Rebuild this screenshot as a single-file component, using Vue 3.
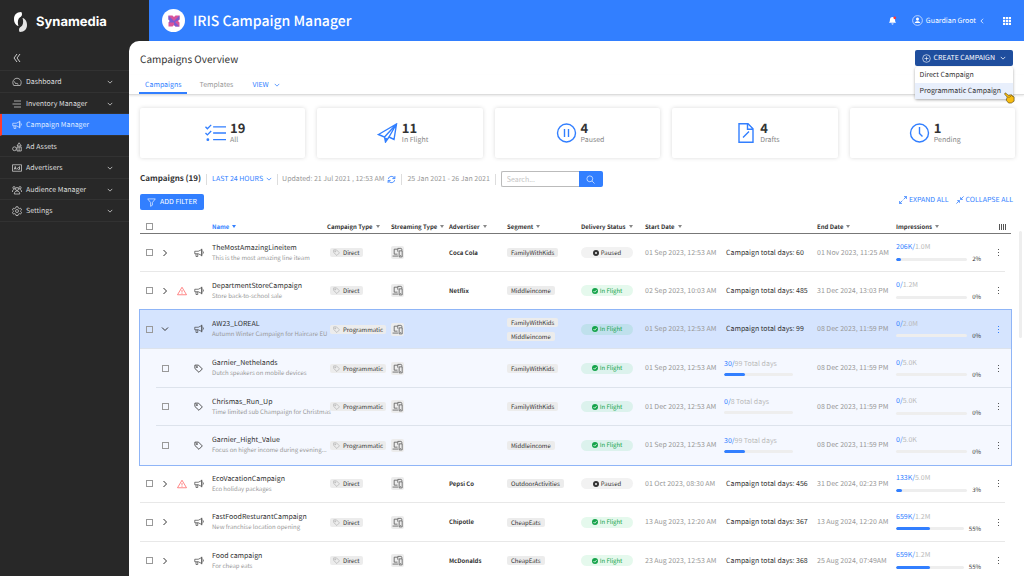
<script setup>
import { ref } from 'vue'

const search = ref('')

const nav = [
  { label: 'Dashboard', icon: 'gauge', sub: true },
  { label: 'Inventory Manager', icon: 'lines', sub: true },
  { label: 'Campaign Manager', icon: 'horn', active: true },
  { label: 'Ad Assets', icon: 'assets' },
  { label: 'Advertisers', icon: 'ad', sub: true },
  { label: 'Audience Manager', icon: 'people', sub: true },
  { label: 'Settings', icon: 'gear', sub: true },
]

const stats = [
  { value: 19, label: 'All', icon: 'checklist' },
  { value: 11, label: 'In Flight', icon: 'plane' },
  { value: 4, label: 'Paused', icon: 'pause' },
  { value: 4, label: 'Drafts', icon: 'draft' },
  { value: 1, label: 'Pending', icon: 'clock' },
]

const row = (name, note, type, adv, segs, status, start, days, end, done, total, pct, extra = {}) =>
  ({ name, note, type, adv, segs, status, start, days, end, done, total, pct, ...extra })

const groups = [
  [row('TheMostAmazingLineitem', 'This is the most amazing line iteam', 'Direct', 'Coca Cola', ['FamilyWithKids'], 'Paused', '01 Sep 2023, 12:53 AM', 60, '01 Nov 2023, 11:25 AM', '206K', '1.0M', 2, { fill: 7 })],
  [row('DepartmentStoreCampaign', 'Store back-to-school sale', 'Direct', 'Netflix', ['Middleincome'], 'In Flight', '02 Sep 2023, 10:03 AM', 485, '31 Dec 2024, 13:03 PM', '0', '1.2M', 0, { warn: true })],
  [
    row('AW23_LOREAL', 'Autumn Winter Campaign for Haircare EU', 'Programmatic', '', ['FamilyWithKids', 'Middleincome'], 'In Flight', '01 Sep 2023, 12:53 AM', 99, '08 Dec 2023, 11:59 PM', '0', '2.0M', 0, { open: true }),
    row('Garnier_Nethelands', 'Dutch speakers on mobile devices', 'Programmatic', '', ['FamilyWithKids'], 'In Flight', '01 Sep 2023, 12:53 AM', 99, '08 Dec 2023, 11:59 PM', '0', '5.0K', 0, { child: true, passed: 30 }),
    row('Chrismas_Run_Up', 'Time limited sub Champaign for Christmas', 'Programmatic', '', ['FamilyWithKids'], 'In Flight', '01 Dec 2023, 12:53 AM', 8, '08 Dec 2023, 11:59 PM', '0', '5.0K', 0, { child: true, passed: 0 }),
    row('Garnier_Hight_Value', 'Focus on higher income during evening...', 'Programmatic', '', ['Middleincome'], 'In Flight', '01 Sep 2023, 12:53 AM', 99, '08 Dec 2023, 11:59 PM', '0', '5.0K', 0, { child: true, passed: 30 }),
  ],
  [row('EcoVacationCampaign', 'Eco holiday packages', 'Direct', 'Pepsi Co', ['OutdoorActivities'], 'Paused', '01 Oct 2023, 08:30 AM', 456, '31 Dec 2024, 02:23 PM', '133K', '5.0M', 3, { warn: true, fill: 8 })],
  [row('FastFoodResturantCampaign', 'New franchise location opening', 'Direct', 'Chipotle', ['CheapEats'], 'In Flight', '13 Aug 2023, 12:20 AM', 367, '13 Aug 2024, 12:20 AM', '659K', '1.2M', 55, { fill: 50 })],
  [row('Food campaign', 'For cheap eats', 'Direct', 'McDonalds', ['CheapEats'], 'In Flight', '23 Aug 2023, 12:53 AM', 368, '25 Aug 2024, 07:49AM', '659K', '1.2M', 55, { fill: 50 })],
]
</script>

<template>
  <svg class="sprite" aria-hidden="true">
    <symbol id="i-down" viewBox="0 0 8 8"><path d="M1 2.500l3 3 3-3" /></symbol>
    <symbol id="i-right" viewBox="0 0 8 8"><path d="M2.500 1l3 3-3 3" /></symbol>
    <symbol id="i-left" viewBox="0 0 8 8"><path d="M5.500 1l-3 3 3 3" /></symbol>
    <symbol id="i-gauge" viewBox="0 0 20 20"><path d="M3.500 17h13c5-8-1-14.500-6.500-14.500S-1.500 9 3.500 17zM8 14l-4-5.500M8 14c1-2.500 4.500-1.500 4 1.500" /></symbol>
    <symbol id="i-lines" viewBox="0 0 20 20"><path d="M4 4h14M1 10h17M4 16h14" /></symbol>
    <symbol id="i-horn" viewBox="0 0 20 20"><path d="M1.500 6.500h7l7-3.500v12l-7-3.500h-7zM4 11.500v5.500h3.500v-5.500M15.500 1.500v15M17.500 6.500c1.800 0 1.800 5 0 5" /></symbol>
    <symbol id="i-assets" viewBox="0 0 20 20"><circle cx="5" cy="13.500" r="3.800" /><path d="M10 10h8.500v8H10zM10 8l4.200-6.500L18.500 8zM14.200 10v8" /></symbol>
    <symbol id="i-ad" viewBox="0 0 20 20"><path d="M1 3.500h18v13H1zM4.500 13l2-6 2 6M5 11.200h3M15 6.500v6.500M15 10.500c0-2-4-2-4 .5s4 2.500 4 .5" /></symbol>
    <symbol id="i-people" viewBox="0 0 20 20"><circle cx="10" cy="8" r="3" /><circle cx="4" cy="5.500" r="2.300" /><circle cx="16" cy="5.500" r="2.300" /><path d="M4.500 18c0-8 11-8 11 0zM1 14c-.5-3 1-5 3.500-5M19 14c.5-3-1-5-3.500-5" /></symbol>
    <symbol id="i-gear" viewBox="0 0 20 20"><circle cx="10" cy="10" r="3" /><path d="M8 1.500h4l.6 2.700 2 1.100 2.600-.9 2 3.400-2 1.900v1.200l2 1.900-2 3.400-2.600-.9-2 1.100-.6 2.600H8l-.6-2.600-2-1.100-2.600.9-2-3.400 2-1.900V9.700l-2-1.900 2-3.400 2.600.9 2-1.100z" /></symbol>
    <symbol id="i-checklist" viewBox="0 0 22 20"><path d="M.5 3.500l2 2L6.500 1.500M8.500 3.500H22M.5 10l2 2 4-4M8.500 10H22M8.500 17H22" /><circle cx="3" cy="17" r=".8" /></symbol>
    <symbol id="i-plane" viewBox="0 0 20 20"><path d="M1 11.500L19 1l-2.500 15.500-5-2.500L8 19l-1-5zM7 14L19 1l-7.500 13M8 19l.8-4.200" /></symbol>
    <symbol id="i-pause" viewBox="0 0 20 20"><circle cx="10" cy="10" r="9" /><path d="M8 6v8M12 6v8" /></symbol>
    <symbol id="i-draft" viewBox="0 0 20 20"><path d="M3.500 .7h9l5 5v13.600h-14zM12 .7v5.500h5.500M7.500 14.500l6-6" /></symbol>
    <symbol id="i-clock" viewBox="0 0 20 20"><circle cx="10" cy="10" r="9" /><path d="M10 4v6.500l3 3" /></symbol>
    <symbol id="i-tag" viewBox="0 0 20 20"><path d="M2 2.500h8l8.500 8.500-7.500 7.500L2 10z" /><circle cx="6.500" cy="6.800" r="1.300" /></symbol>
    <symbol id="i-devices" viewBox="0 0 20 20"><path d="M10 13H4V4h6M1 16.500h10M10.500 8.500V2.500h5.500c2 0 2 2 2 4M13 7h5.500v11H13zM15 15.500h1.500" /></symbol>
    <symbol id="i-warn" viewBox="0 0 20 20"><path d="M10 2.500L19 17.500H1zM10 8v5M10 14.500v1.500" /></symbol>
    <symbol id="i-refresh" viewBox="0 0 20 20"><path d="M3 8.500C4.500 2 13.500 1 17 7.500M17.500 2.500v5.500h-5.500M17 11.500c-1.500 6.500-10.500 7.500-14 1M2.500 17.500V12H8" /></symbol>
    <symbol id="i-search" viewBox="0 0 20 20"><circle cx="8.500" cy="8.500" r="6.500" /><path d="M13.500 13.500L19 19" /></symbol>
    <symbol id="i-filter" viewBox="0 0 20 20"><path d="M1.500 2h17l-6.500 8v6l-4 2.500V10z" /></symbol>
    <symbol id="i-expand" viewBox="0 0 20 20"><path d="M11.500 8.500L19 1M12.500 1.500h6v6M8.500 11.500L1 19M1.500 12.500v6h6" /></symbol>
    <symbol id="i-collapse" viewBox="0 0 20 20"><path d="M19 1l-7.500 7.500M11.500 3v5.500H17M1 19l7.500-7.500M3 11.500h5.500V17" /></symbol>
    <symbol id="i-plus" viewBox="0 0 20 20"><circle cx="10" cy="10" r="8.500" /><path d="M10 5.500v9M5.500 10h9" /></symbol>
  </svg>

  <div class="app">
    <header class="top">
      <div class="brand">
        <svg class="brand-mark" viewBox="0 0 14 22" aria-hidden="true">
          <path class="m1" d="M7.500 1C3 1 .5 4 .5 8s2 6.500 4.500 7c-.8-2-1-5.500 .3-7.500C6.500 6 8.500 5.500 8.500 3.500 8.500 2 8.200 1.200 7.500 1z" />
          <path class="m2" d="M6.500 21c4.500 0 7-3 7-7s-2-6.500-4.500-7c.8 2 1 5.500-.3 7.500-1.200 1.500-3.200 2-3.200 4 0 1.500.3 2.300 1 2.500z" />
        </svg>
        <span>Synamedia</span>
      </div>
      <div class="bar">
        <span class="product" aria-hidden="true">
          <svg viewBox="0 0 12 12">
            <path class="p1" d="M.5 .5h4L6 2l1.500-1.500h4v4L10 6l1.500 1.500v4h-4L6 10l-1.500 1.500h-4v-4L2 6 .5 4.500z" />
            <path class="p2" d="M.5 4.500v-4L6 6l5.500-5.500v4L6 7.500l-5.500 0L2 6zM6 6l5.500 5.500h-4L6 10z" />
          </svg>
        </span>
        <h1>IRIS Campaign Manager</h1>
        <button class="plain bell" aria-label="Notifications">
          <svg viewBox="0 0 10 10"><path d="M1 7.500c1.200-1 1-2 1.200-3.500C2.500 2 3.500 1.200 5 1.200S7.500 2 7.800 4C8 5.500 7.800 6.500 9 7.500zM3.800 8.200h2.400c0 1.600-2.400 1.600-2.400 0z" /><circle cx="7.500" cy="2" r="1.500" /></svg>
        </button>
        <button class="plain user">
          <svg class="avatar" viewBox="0 0 12 12" aria-hidden="true"><circle cx="6" cy="6" r="5.300" /><path d="M6 2.800c2.200 0 2 3.400 0 3.400s-2.200-3.400 0-3.400zM3 8.600c.2-2.400 5.800-2.400 6 0z" /></svg>
          Guardian Groot
          <svg class="ico tiny"><use href="#i-left" /></svg>
        </button>
        <button class="plain grid-btn" aria-label="Apps">
          <svg viewBox="0 0 8 8"><path d="M0 0h2.200v2.200H0zM2.900 0h2.200v2.200H2.900zM5.800 0H8v2.200H5.800zM0 2.900h2.200v2.200H0zM2.900 2.900h2.200v2.200H2.900zM5.800 2.900H8v2.200H5.800zM0 5.800h2.200V8H0zM2.900 5.800h2.200V8H2.900zM5.800 5.800H8V8H5.800z" /></svg>
        </button>
      </div>
    </header>

    <div class="body">
      <nav class="side">
        <button class="plain fold" aria-label="Collapse menu">
          <svg viewBox="0 0 8 10"><path d="M4 1L1 5l3 4M7 1L4 5l3 4" /></svg>
        </button>
        <ul>
          <li v-for="n in nav" :key="n.label" :class="{ active: n.active }">
            <a href="#">
              <svg class="ico nav-ico"><use :href="'#i-' + n.icon" /></svg>
              <span>{{ n.label }}</span>
              <svg v-if="n.sub" class="ico tiny"><use href="#i-down" /></svg>
            </a>
          </li>
        </ul>
      </nav>

      <main>
        <div class="head">
          <h2>Campaigns Overview</h2>
          <div class="create">
            <button class="create-btn">
              <svg class="ico s9"><use href="#i-plus" /></svg>
              CREATE CAMPAIGN
              <svg class="ico tiny"><use href="#i-down" /></svg>
            </button>
            <div class="menu">
              <a href="#">Direct Campaign</a>
              <a href="#" class="hover">Programmatic Campaign</a>
              <svg class="hand" viewBox="0 0 12 12" aria-hidden="true"><path d="M1 .8c.8-.5 1.300 0 1.800.5L4.500 3 8 2.500l3 2.500v4.500L8 11.500H5L2.500 8.500l.3-1.500L3.500 5 1 2.200C.6 1.700.6 1.100 1 .8z" /><path d="M6 3.500l1.500 1.500M8 3l1.500 1.500M4.500 4.500L6 6" /></svg>
            </div>
          </div>
        </div>
        <div class="tabs">
          <a href="#" class="tab on">Campaigns</a>
          <a href="#" class="tab">Templates</a>
          <button class="plain view">VIEW <svg class="ico tiny"><use href="#i-down" /></svg></button>
        </div>

        <section class="stats">
          <div v-for="s in stats" :key="s.label" class="card">
            <svg class="ico stat-ico"><use :href="'#i-' + s.icon" /></svg>
            <div>
              <strong>{{ s.value }}</strong>
              <span>{{ s.label }}</span>
            </div>
          </div>
        </section>

        <div class="tools">
          <h3>Campaigns (19)</h3>
          <button class="plain range">LAST 24 HOURS <svg class="ico tiny"><use href="#i-down" /></svg></button>
          <div class="updated">Updated: 21 Jul 2021 , 12:53 AM
            <button class="plain" aria-label="Refresh"><svg class="ico s9 blue bold"><use href="#i-refresh" /></svg></button>
          </div>
          <span class="dates">25 Jan 2021 - 26 Jan 2021</span>
          <form class="search" @submit.prevent>
            <input v-model="search" type="text" placeholder="Search..." aria-label="Search campaigns">
            <button aria-label="Search"><svg class="ico s9"><use href="#i-search" /></svg></button>
          </form>
        </div>

        <div class="actions">
          <button class="filter"><svg class="ico s9"><use href="#i-filter" /></svg>ADD FILTER</button>
          <button class="plain link"><svg class="ico s8 bold"><use href="#i-expand" /></svg>EXPAND ALL</button>
          <button class="plain link"><svg class="ico s8 bold"><use href="#i-collapse" /></svg>COLLAPSE ALL</button>
        </div>

        <div class="list">
          <table>
            <colgroup>
              <col class="c-check"><col class="c-open"><col class="c-warn"><col class="c-kind"><col class="c-name">
              <col class="c-type"><col class="c-stream"><col class="c-adv"><col class="c-seg"><col class="c-status">
              <col class="c-start"><col class="c-days"><col class="c-end"><col class="c-imp"><col class="c-menu"><col class="c-tail">
            </colgroup>
            <thead>
              <tr>
                <th><input type="checkbox" aria-label="Select all"></th>
                <th colspan="3"></th>
                <th class="sorted">Name<i></i></th>
                <th>Campaign Type<i></i></th>
                <th>Streaming Type<i></i></th>
                <th>Advertiser<i></i></th>
                <th>Segment<i></i></th>
                <th>Delivery Status<i></i></th>
                <th colspan="2">Start Date<i></i></th>
                <th>End Date<i></i></th>
                <th>Impressions<i></i></th>
                <th colspan="2"><button class="plain cols" aria-label="Columns"><b></b><b></b><b></b><b></b></button></th>
              </tr>
            </thead>
            <tbody v-for="(g, gi) in groups" :key="gi" :class="{ group: g.length > 1 }">
              <tr v-for="r in g" :key="r.name" :class="{ child: r.child, open: r.open }">
                <td><input v-if="!r.child" type="checkbox" :aria-label="'Select ' + r.name"></td>
                <td>
                  <input v-if="r.child" type="checkbox" :aria-label="'Select ' + r.name">
                  <button v-else class="plain toggle" aria-label="Toggle"><svg class="ico s8 caret"><use :href="r.open ? '#i-down' : '#i-right'" /></svg></button>
                </td>
                <td><svg v-if="r.warn" class="ico s10 red"><use href="#i-warn" /></svg></td>
                <td class="kind"><svg class="ico" :class="r.child ? 's9 bold' : 's10'"><use :href="r.child ? '#i-tag' : '#i-horn'" /></svg></td>
                <td class="name"><div>{{ r.name }}</div><small>{{ r.note }}</small></td>
                <td class="type"><span class="chip"><svg class="ico s7"><use href="#i-tag" /></svg>{{ r.type }}</span></td>
                <td><span class="device"><svg class="ico s11"><use href="#i-devices" /></svg></span></td>
                <td class="adv">{{ r.adv }}</td>
                <td><div class="segs"><span v-for="s in r.segs" :key="s" class="chip">{{ s }}</span></div></td>
                <td>
                  <span class="pill" :class="{ live: r.status === 'In Flight' }">
                    <svg viewBox="0 0 10 10" aria-hidden="true"><circle cx="5" cy="5" r="5" /><path v-if="r.status === 'In Flight'" d="M2.500 5l2 2 3.200-3.500" /><path v-else d="M3.500 3.500l3 3M6.500 3.500l-3 3" /></svg>
                    {{ r.status }}
                  </span>
                </td>
                <td class="date">{{ r.start }}</td>
                <td>
                  <div v-if="r.child" class="meter days">
                    <div class="amount"><em>{{ r.passed }}/</em>{{ r.days }} Total days</div>
                    <div class="track"><div :style="{ width: (r.passed / r.days) * 100 + '%' }"></div></div>
                  </div>
                  <div v-else class="total">Campaign total days: {{ r.days }}</div>
                </td>
                <td class="date">{{ r.end }}</td>
                <td>
                  <div class="meter">
                    <div class="amount"><em>{{ r.done }}/</em>{{ r.total }}</div>
                    <div class="line">
                      <div class="track"><div :style="{ width: (r.fill || 0) + '%' }"></div></div>
                      <span>{{ r.pct }}%</span>
                    </div>
                  </div>
                </td>
                <td><button class="plain more" aria-label="More"><b></b><b></b><b></b></button></td>
                <td></td>
              </tr>
            </tbody>
          </table>
          <div class="thumb"></div>
        </div>
      </main>
    </div>
  </div>
</template>

<style>
html, body { margin: 0; background: #282828; }
</style>

<style scoped>
.app, .app * { box-sizing: border-box; }
.app {
  display: flex; flex-direction: column; height: 100vh; overflow: hidden;
  font-family: "Noto Sans CJK SC", "Noto Sans", sans-serif; text-rendering: geometricPrecision;
  font-size: 7px; line-height: 10px; color: #333; background: #282828;
}
.sprite { position: absolute; width: 0; height: 0; }
h1, h2, h3, ul { margin: 0; padding: 0; font-weight: 400; }
a { color: inherit; text-decoration: none; }
button { font: inherit; color: inherit; border: 0; padding: 0; cursor: pointer; text-rendering: inherit; }
.plain { background: none; display: flex; align-items: center; }
.ico { width: 10px; height: 10px; flex: none; fill: none; stroke: currentColor; stroke-width: 1.4; display: block; }
.tiny { width: 6px; height: 6px; stroke-width: 1; }
.s7 { width: 7px; height: 7px; }
.s8 { width: 8px; height: 8px; }
.s9 { width: 9px; height: 9px; }
.s10 { width: 10px; height: 10px; }
.s11 { width: 11px; height: 11px; }
.bold { stroke-width: 2; }
.caret { stroke-width: 1; }
.blue { color: #327fff; }
.red { color: #f55; }

.top { display: flex; flex: none; height: 41px; color: #fff; }
.brand { width: 149px; display: flex; align-items: center; gap: 8px; padding: 2px 0 0 13px; font: 700 13px/20px Inter, sans-serif; }
.brand-mark { width: 15px; height: 22px; }
.m1 { fill: #fff; }
.m2 { fill: #e4e4e4; }
.bar { flex: 1; display: flex; align-items: center; background: #327fff; padding: 0 13px; }
.product { width: 23px; height: 23px; border-radius: 50%; background: #fff; display: flex; align-items: center; justify-content: center; margin-right: 8px; }
.product svg { width: 12px; height: 12px; }
.p1 { fill: #d8539b; }
.p2 { fill: #7a5bd0; }
h1 { font-size: 14px; line-height: 20px; font-weight: 500; flex: 1; }
.bell svg { width: 9px; height: 9px; fill: #fff; }
.bell circle { fill: #f33; }
.user { margin: 0 18px 0 15px; gap: 3px; }
.avatar { width: 11px; height: 11px; fill: none; stroke: #fff; stroke-width: .7; }
.avatar path { fill: #fff; stroke: none; }
.grid-btn svg { width: 8px; height: 8px; fill: #fff; }

.body { flex: 1; display: flex; min-height: 0; }
.side { width: 129px; flex: none; color: #ddd; }
.fold { height: 29px; padding: 5px 0 0 13px; }
.fold svg { width: 8px; height: 10px; fill: none; stroke: #ccc; stroke-width: 1; }
.side ul { list-style: none; border-top: 1px solid #323232; }
.side li { height: 22px; border-bottom: 1px solid #323232; }
.side li:nth-child(even) { height: 21px; }
.side a { display: flex; align-items: center; height: 100%; padding: 1px 16px 0 12px; gap: 4px; }
.side a span { flex: 1; }
.side li.active { background: #327fff; border-left: 2px solid #ff3b30; color: #dfeaff; }
.side li.active a { padding-left: 10px; }

main { flex: 1; min-width: 0; background: #fff; border-top-left-radius: 10px; overflow: hidden; }
.head { display: flex; justify-content: space-between; align-items: center; height: 34px; padding: 0 11px; }
h2 { font-size: 10px; line-height: 15px; }
.create { position: relative; }
.create-btn { display: flex; align-items: center; gap: 3px; height: 16px; padding: 0 7px; background: #1f4e9e; color: #fff; border-radius: 2px; }
.create-btn .tiny { margin-left: 2px; }
.menu { position: absolute; top: 17px; left: 0; right: 0; background: #fff; box-shadow: 0 1px 3px rgba(0, 0, 0, .35); border-radius: 2px; z-index: 2; }
.menu a { display: block; height: 16px; line-height: 16px; padding-left: 5px; white-space: nowrap; }
.menu .hover { background: #e8effc; }
.hand { position: absolute; right: -2px; bottom: -5px; width: 11px; height: 12px; fill: #f8bd12; stroke: #5b4710; stroke-width: .7; }
.tabs { display: flex; height: 20px; padding-left: 10px; border-bottom: 1px solid #ddd; box-shadow: 0 1px 2px rgba(0, 0, 0, .1); }
.tab { height: 19px; padding: 5px 6px 0; color: #999; margin-right: 6px; }
.tab.on { color: #327fff; border-bottom: 2px solid #327fff; }
.view { color: #327fff; gap: 5px; height: 19px; padding: 1px 0 0 7px; }

.stats { display: grid; grid-template-columns: repeat(5, 1fr); gap: 12px; padding: 13px 9px 0 11px; }
.card { height: 50px; border-radius: 2px; box-shadow: 0 0 4px rgba(0, 0, 0, .15); display: flex; align-items: center; justify-content: center; gap: 4px; padding-left: 5px; }
.stat-ico { width: 21px; height: 20px; color: #327fff; stroke-width: 1.4; }
.card strong { display: block; font-size: 13px; line-height: 14px; font-weight: 700; color: #333; }
.card span { display: block; color: #888; }

.tools { display: flex; align-items: center; height: 16px; margin: 13px 11px 0; color: #999; }
.tools > * + * { border-left: 1px solid #ddd; height: 11px; padding: 0 5px; display: flex; align-items: center; white-space: nowrap; }
h3 { font-size: 8px; line-height: 12px; font-weight: 700; color: #333; margin-right: 5px; }
.tools .range { color: #327fff; gap: 3px; border-radius: 0; }
.tools .updated { gap: 3px; padding-left: 4px; }
.tools .search { padding-right: 0; }
.search input { width: 78px; height: 16px; border: 1px solid #bbb; border-right: 0; border-radius: 2px 0 0 2px; padding: 0 5px; font: inherit; outline: 0; }
.search input::placeholder { color: #c4c4c4; opacity: 1; }
.search button { width: 24px; height: 16px; background: #327fff; color: #fff; border-radius: 0 2px 2px 0; display: flex; align-items: center; justify-content: center; }

.actions { display: flex; align-items: flex-start; height: 16px; margin: 7px 11px 0; gap: 7px; }
.filter { display: flex; align-items: center; gap: 4px; height: 16px; padding: 0 7px; background: #327fff; color: #fff; border-radius: 2px; margin-right: auto; }
.link { color: #327fff; gap: 2px; height: 12px; }

.list { display: flex; padding: 7px 2px 0 11px; }
table { flex: 1; width: 100%; table-layout: fixed; border-collapse: separate; border-spacing: 0; }
.c-check { width: 16px; } .c-open { width: 17px; } .c-warn { width: 18px; } .c-kind { width: 21px; }
.c-name { width: 115px; } .c-type { width: 64px; } .c-stream { width: 58px; } .c-adv { width: 58px; }
.c-seg { width: 74px; } .c-status { width: 64px; } .c-start { width: 79px; } .c-days { width: 93px; }
.c-end { width: 79px; } .c-imp { width: 94px; } .c-menu { width: 15px; } .c-tail { width: 6px; }
th, td { padding: 0; text-align: left; vertical-align: middle; white-space: nowrap; }
th { height: 17px; padding-top: 3px; border-bottom: 1px solid #777; font-size: 6px; font-weight: 700; color: #333; }
th i { display: inline-block; border: 2px solid transparent; border-top: 3px solid #888; border-bottom: 0; margin-left: 3px; vertical-align: 1px; }
.sorted { color: #327fff; }
.sorted i { border-top-color: #327fff; }
input[type="checkbox"] { appearance: none; display: block; width: 7px; height: 7px; margin: 0 0 0 6px; border: 1px solid #999; background: #fff; }
.cols { gap: 1px; margin-left: 9px; }
.cols b { width: 1px; height: 6px; background: #555; }
td { height: 38px; border-bottom: 1px solid #e8e8e8; }
td:last-child { border-bottom-color: transparent; }
tbody:nth-of-type(5) td, .group .open td, .group .child:nth-child(2) td, .group .child:nth-child(4) td { height: 39px; }
.group { outline: 1px solid #8fb5f7; background: #f5f8ff; }
.group .open { background: #d5e4fe; }
.group .child td:first-child { border-bottom-color: transparent; }
.group td { border-bottom-color: #dde3ec; }
.group .child:last-child td { border-bottom-color: transparent; }
.group input[type="checkbox"] { background: none; }
.toggle { margin-left: 5px; }
.red { margin-left: 4px; }
.kind .ico { margin-left: 3px; color: #444; }
.name div { font-size: 7px; line-height: 10px; }
.name small { display: block; font-size: 6px; line-height: 10px; color: #999; }
.type { padding-left: 3px; }
.chip { display: inline-flex; align-items: center; gap: 3px; height: 9px; padding: 0 4px; background: #ececec; border-radius: 2px; font-size: 6px; line-height: 9px; vertical-align: middle; }
.chip .ico { color: #999; }
.type .chip { display: flex; width: max-content; padding: 0 3px; }
.device { display: flex; width: 13px; height: 13px; align-items: center; justify-content: center; background: #ececec; border-radius: 2px; color: #555; }
.adv { font-size: 6px; font-weight: 700; }
.segs { display: flex; flex-direction: column; align-items: flex-start; gap: 5px; }
.pill { display: flex; align-items: center; justify-content: center; gap: 2px; width: 52px; height: 11px; border-radius: 6px; background: #f2f2f2; font-size: 6px; }
.pill svg { width: 6px; height: 6px; fill: #333; stroke: #fff; stroke-width: 1.3; }
.pill circle { stroke: none; }
.pill path { fill: none; }
.live { background: rgba(0, 200, 80, .1); color: #15a34a; }
.live svg { fill: #15a34a; }
.date { color: #999; }
.total { padding-left: 2px; }
.amount { line-height: 9px; color: #bbb; }
.amount em { font-style: normal; color: #327fff; }
.meter { width: 85px; padding-top: 2px; }
.meter.days { width: 69px; }
.days .track { margin: 4px 0 3px; }
.line { display: flex; align-items: center; gap: 5px; height: 10px; margin-top: 2px; font-size: 6px; }
.track { flex: 1; height: 3px; border-radius: 2px; background: #eee; overflow: hidden; }
.track div { height: 3px; border-radius: 2px; background: #327fff; }
.more { flex-direction: column; gap: 2px; margin-left: 8px; }
.more b { width: 1px; height: 1px; background: #555; }
.open .more b { background: #327fff; }
.thumb { flex: none; width: 3px; height: 107px; margin: 14px 0 0 8px; border-radius: 2px; background: #eee; }
</style>
